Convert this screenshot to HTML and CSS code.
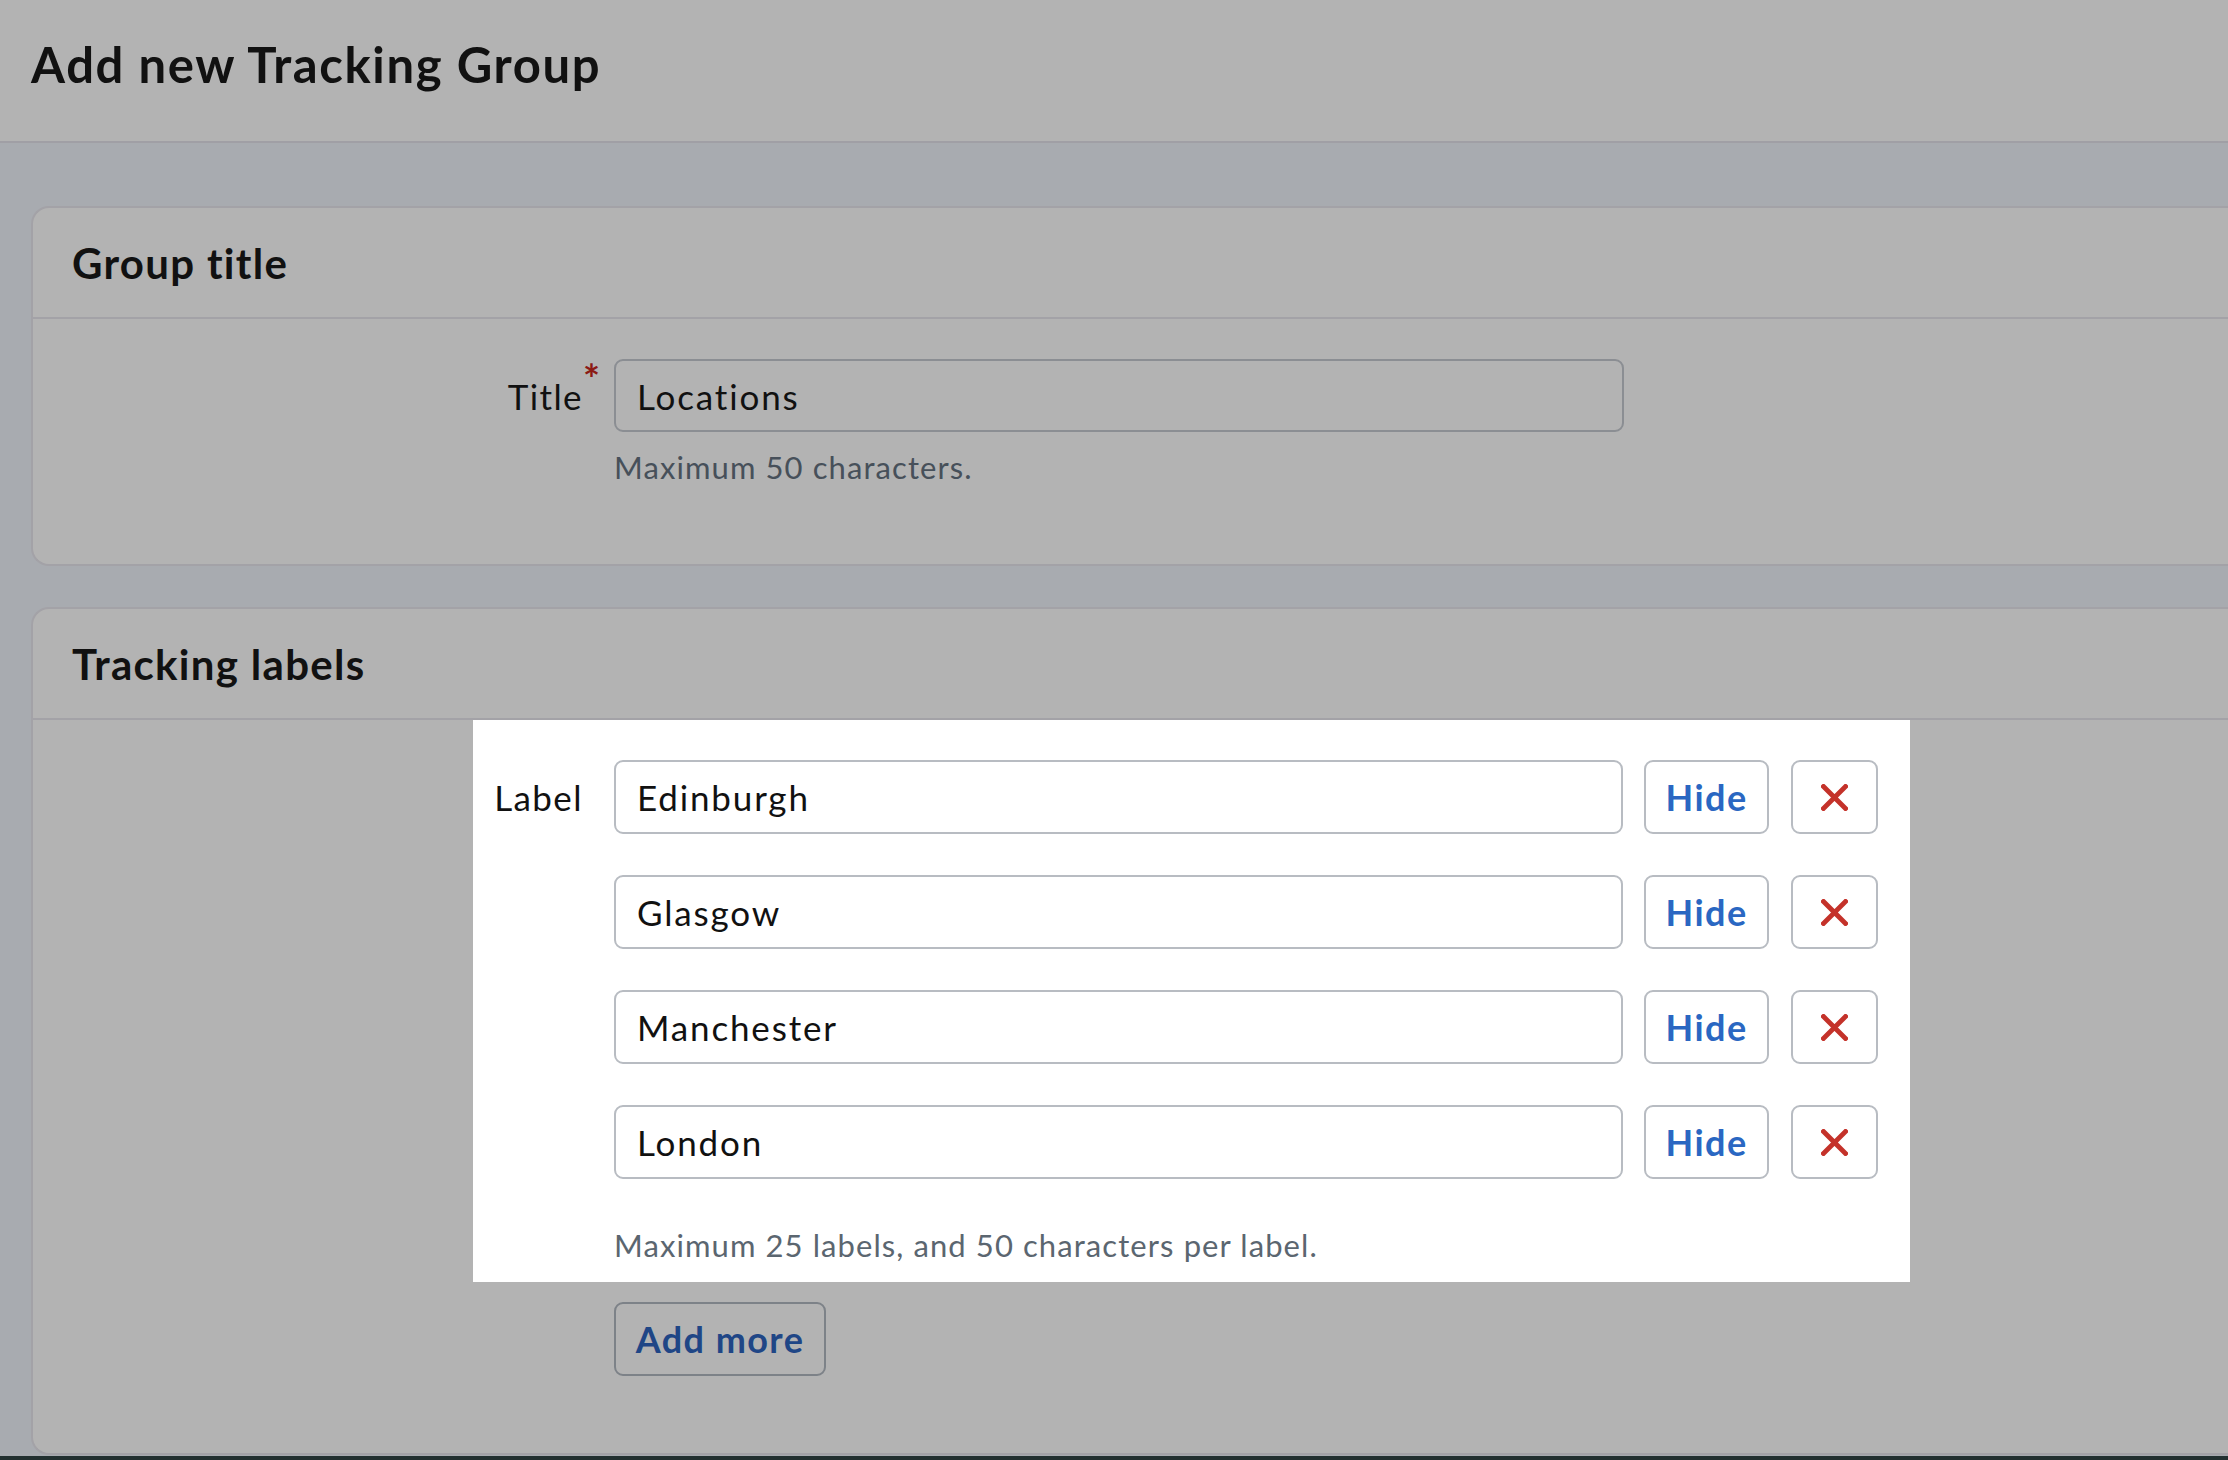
FILE: index.html
```html
<!DOCTYPE html>
<html lang="en">
<head>
<meta charset="utf-8">
<title>Add new Tracking Group</title>
<link rel="stylesheet" href="styles.css">
</head>
<body>
<header class="page-header">
  <h1 class="page-title">Add new Tracking Group</h1>
</header>
<main class="page-main">
  <section class="card">
    <div class="card-head"><h2 class="card-title">Group title</h2></div>
    <div class="card-body">
      <div class="form-area form-area--title">
        <div class="field-row">
          <label class="field-label">Title<span class="req">*</span></label>
          <div class="input input--dim">Locations</div>
        </div>
        <div class="help-row"><p class="help help--dim">Maximum 50 characters.</p></div>
      </div>
    </div>
  </section>

  <section class="card card--labels">
    <div class="card-head"><h2 class="card-title">Tracking labels</h2></div>
    <div class="card-body">
      <div class="form-area form-area--spot">
        <div class="label-rows">
          <div class="field-row">
            <label class="field-label">Label</label>
            <div class="input">Edinburgh</div>
            <button class="btn btn-hide">Hide</button>
            <button class="btn btn-remove" aria-label="Remove"><svg viewBox="0 0 27 27" width="27" height="27"><path d="M2.5 2.5L24.5 24.5M24.5 2.5L2.5 24.5" stroke="#c4322a" stroke-width="4.8" stroke-linecap="square"/></svg></button>
          </div>
          <div class="field-row">
            <span class="field-label"></span>
            <div class="input">Glasgow</div>
            <button class="btn btn-hide">Hide</button>
            <button class="btn btn-remove" aria-label="Remove"><svg viewBox="0 0 27 27" width="27" height="27"><path d="M2.5 2.5L24.5 24.5M24.5 2.5L2.5 24.5" stroke="#c4322a" stroke-width="4.8" stroke-linecap="square"/></svg></button>
          </div>
          <div class="field-row">
            <span class="field-label"></span>
            <div class="input">Manchester</div>
            <button class="btn btn-hide">Hide</button>
            <button class="btn btn-remove" aria-label="Remove"><svg viewBox="0 0 27 27" width="27" height="27"><path d="M2.5 2.5L24.5 24.5M24.5 2.5L2.5 24.5" stroke="#c4322a" stroke-width="4.8" stroke-linecap="square"/></svg></button>
          </div>
          <div class="field-row">
            <span class="field-label"></span>
            <div class="input">London</div>
            <button class="btn btn-hide">Hide</button>
            <button class="btn btn-remove" aria-label="Remove"><svg viewBox="0 0 27 27" width="27" height="27"><path d="M2.5 2.5L24.5 24.5M24.5 2.5L2.5 24.5" stroke="#c4322a" stroke-width="4.8" stroke-linecap="square"/></svg></button>
          </div>
        </div>
        <div class="help-row"><p class="help">Maximum 25 labels, and 50 characters per label.</p></div>
      </div>
      <div class="form-area form-area--add">
        <div class="help-row"><button class="btn btn-add">Add more</button></div>
      </div>
    </div>
  </section>
</main>
</body>
</html>
```

FILE: styles.css
```css
* { box-sizing: border-box; }

html {
  margin: 0;
  padding: 0;
  background: #223030;
  height: 1460px;
  overflow: hidden;
}

body {
  margin: 0;
  padding: 0;
  background: #a8abb0;
  font-family: Lato, "Noto Sans", sans-serif;
  color: #111;
  overflow: hidden;
  height: 1456px;
  letter-spacing: 0.045em;
}

.page-header {
  height: 143px;
  background: #b3b3b3;
  border-bottom: 2px solid #a09fa5;
  display: flex;
  align-items: center;
  padding-left: 31px;
  padding-bottom: 14px;
}

.page-title {
  margin: 0;
  font-size: 49px;
  font-weight: 700;
  letter-spacing: 0.033em;
}

.page-main {
  padding: 63px 0 0 31px;
}

.card {
  background: #b3b3b3;
  border: 2px solid #a3a2a7;
  border-right: none;
  border-radius: 18px 0 0 18px;
  margin-right: -40px;
  margin-bottom: 41px;
}

.card-head {
  height: 111px;
  border-bottom: 2px solid #a3a2a7;
  display: flex;
  align-items: center;
  padding-left: 39px;
}

.card-title {
  margin: 0;
  font-size: 42px;
  font-weight: 700;
  letter-spacing: 0.031em;
}

.form-area {
  margin-left: 440px;
  width: 1437px;
  padding-left: 20px;
  padding-right: 32px;
}

.form-area--title {
  padding-top: 40px;
  padding-bottom: 77px;
}

.form-area--spot {
  background: #ffffff;
  padding-top: 40px;
  padding-bottom: 17px;
}

.form-area--add {
  padding-top: 20px;
  padding-bottom: 77px;
}

.label-rows {
  display: flex;
  flex-direction: column;
  gap: 41px;
}

.field-row {
  display: flex;
  align-items: center;
}

.field-label {
  width: 90px;
  margin-right: 31px;
  text-align: right;
  font-size: 35px;
  position: relative;
  white-space: nowrap;
  letter-spacing: 0.04em;
}

.req {
  position: absolute;
  left: 100%;
  top: -20px;
  margin-left: 0;
  color: #8c1a14;
  font-size: 40px;
  font-weight: 700;
}

.input {
  width: 1010px;
  height: 74px;
  border: 2px solid #b8bcc2;
  border-radius: 9px;
  background: #fff;
  display: flex;
  align-items: center;
  padding-left: 21px;
  font-size: 35px;
  letter-spacing: 0.053em;
  color: #111;
}

.input--dim {
  background: #b3b3b3;
  border-color: #8b8e93;
  height: 73px;
}

.btn {
  font-family: inherit;
  letter-spacing: 0.04em;
  height: 74px;
  border: 2px solid #b8bcc2;
  border-radius: 9px;
  background: #fff;
  display: flex;
  align-items: center;
  justify-content: center;
  padding: 0;
  cursor: pointer;
}

.btn-hide {
  width: 125px;
  margin-left: 21px;
  color: #2a67c2;
  font-size: 36px;
  font-weight: 700;
}

.btn-remove {
  width: 87px;
  margin-left: 22px;
}

.help-row {
  padding-left: 121px;
}

.help {
  margin: 0;
  font-size: 31px;
  line-height: 40px;
  letter-spacing: 0.035em;
  color: #5b6670;
}

.help--dim {
  color: #47505a;
  margin-top: 15px;
}

.form-area--spot .help-row {
  margin-top: 46px;
}

.btn-add {
  width: 212px;
  height: 74px;
  background: #b3b3b3;
  border-color: #7d8288;
  color: #1f4686;
  font-size: 36px;
  font-weight: 700;
}
```
